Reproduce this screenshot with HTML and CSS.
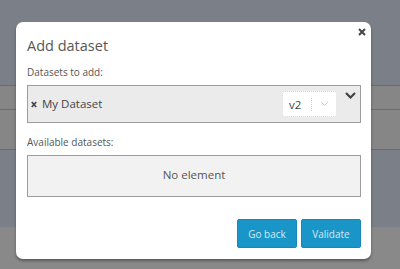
FILE: index.html
```html
<!DOCTYPE html>
<html lang="en">
<head>
    <meta charset="UTF-8">
    <title>Add dataset</title>
    <link rel="stylesheet" href="styles.css">
</head>
<body>
    <div class="page">
        <div class="topbar"></div>
        <div class="rule"></div>
        <div class="row row-short"></div>
        <div class="rule"></div>
        <div class="row row-tall"></div>
        <div class="rule"></div>
        <div class="band"></div>
        <div class="footer"></div>
    </div>

    <div class="modal">
        <svg class="close" width="8" height="8" viewBox="0 0 8 8">
            <path d="M1 1 L7 7 M7 1 L1 7" stroke="#444" stroke-width="2" fill="none"/>
        </svg>

        <h1 class="modal-title">Add dataset</h1>

        <div class="field-label">Datasets to add:</div>
        <div class="select-box">
            <div class="tag">
                <svg width="6" height="7" viewBox="0 0 6 7">
                    <path d="M0.8 1 L5.2 6 M5.2 1 L0.8 6" stroke="#444" stroke-width="1.7" fill="none"/>
                </svg>
                <span>My Dataset</span>
            </div>
            <div class="version">
                <span class="version-value">v2</span>
                <span class="version-sep"></span>
                <svg class="version-arrow" width="7" height="4" viewBox="0 0 7 4">
                    <path d="M0.5 0.5 L3.5 3.3 L6.5 0.5" stroke="#c8c8c8" stroke-width="1" fill="none"/>
                </svg>
            </div>
            <svg class="chevron" width="11" height="7" viewBox="0 0 11 7">
                <path d="M1 1 L5.5 5.5 L10 1" stroke="#444" stroke-width="2.2" fill="none"/>
            </svg>
        </div>

        <div class="field-label spaced">Available datasets:</div>
        <div class="empty-box">No element</div>

        <div class="actions">
            <button class="btn">Go back</button>
            <button class="btn">Validate</button>
        </div>
    </div>
</body>
</html>
```

FILE: styles.css
```css
body {
    margin: 0;
    width: 400px;
    height: 269px;
    overflow: hidden;
    position: relative;
    font-family: 'Open Sans', 'Liberation Sans', sans-serif;
}
.page {
    display: flex;
    flex-direction: column;
    height: 269px;
}
.topbar {
    height: 85px;
    background: #7b8088;
}
.rule {
    height: 1px;
    background: #686c71;
}
.row {
    background: #868686;
}
.row-short {
    height: 23px;
}
.row-tall {
    height: 39px;
}
.band {
    height: 77px;
    background: #7b8088;
}
.footer {
    flex: 1;
    background: #898989;
}
.modal {
    position: absolute;
    left: 16px;
    top: 22px;
    width: 355px;
    height: 237px;
    box-sizing: border-box;
    padding: 14px 10px 0 11px;
    background: #fff;
    border-radius: 7px;
    box-shadow: 0 2px 3px rgba(0, 0, 0, 0.35);
}
.close {
    position: absolute;
    right: 5px;
    top: 6px;
}
.modal-title {
    margin: 0;
    font-size: 14.5px;
    line-height: 20px;
    font-weight: normal;
    color: #575757;
}
.field-label {
    margin-top: 9px;
    font-size: 10px;
    line-height: 14px;
    color: #555;
}
.field-label.spaced {
    margin-top: 12px;
}
.select-box {
    margin-top: 6px;
    height: 38px;
    box-sizing: border-box;
    border: 1px solid #9c9c9c;
    background: #ebebeb;
    display: flex;
    align-items: center;
    padding: 0 4px 0 3px;
}
.tag {
    flex: 1;
    display: flex;
    align-items: center;
    gap: 5px;
    font-size: 11.5px;
    line-height: 16px;
    color: #444;
}
.version {
    width: 55px;
    height: 26px;
    box-sizing: border-box;
    background: #fff;
    border: 1px dotted #d6d6d6;
    border-radius: 3px;
    display: flex;
    align-items: center;
    padding-left: 6px;
    font-size: 11.5px;
    color: #444;
}
.version-sep {
    width: 0;
    height: 13px;
    border-left: 1px dotted #d0d0d0;
    margin: 0 9px 0 10px;
}
.chevron {
    align-self: flex-start;
    margin: 6px 0 0 8px;
}
.empty-box {
    margin-top: 6px;
    height: 42px;
    box-sizing: border-box;
    border: 1px solid #9c9c9c;
    background: #f2f2f2;
    padding: 11px 0 13px;
    text-align: center;
    font-size: 11.5px;
    line-height: 16px;
    color: #555;
}
.actions {
    margin-top: 22px;
    display: flex;
    justify-content: flex-end;
    gap: 4px;
}
.btn {
    width: 60px;
    height: 29px;
    border: 1px solid #1688b7;
    border-radius: 2px;
    background: #1a95c7;
    color: #d4eaf5;
    font-family: 'Open Sans', 'Liberation Sans', sans-serif;
    font-size: 10px;
    padding: 0;
}
```
